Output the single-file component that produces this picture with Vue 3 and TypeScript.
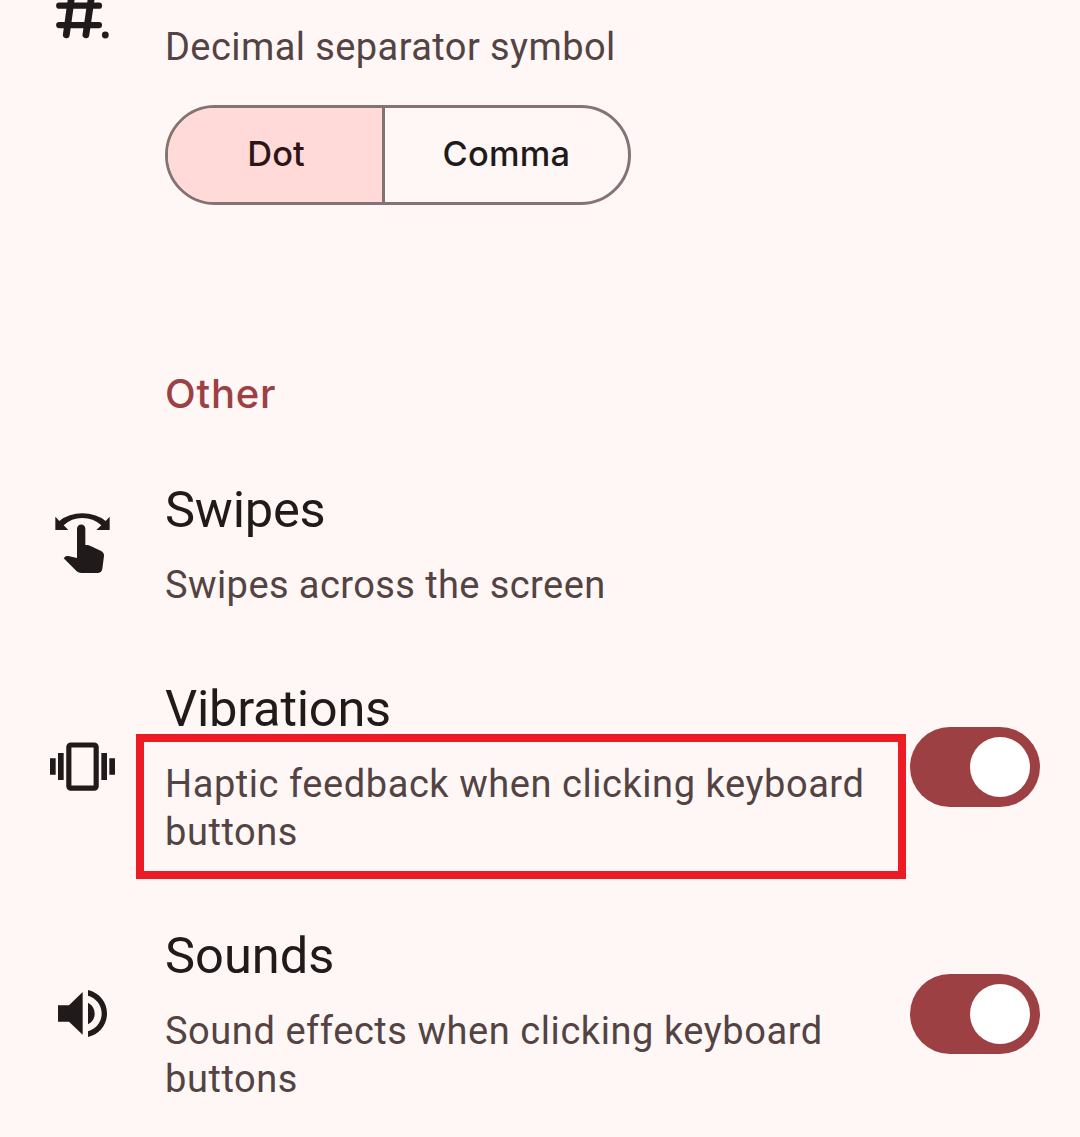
<script setup lang="ts">
import { ref } from 'vue'

interface Setting {
  id: 'swipes' | 'vibrations' | 'sounds'
  title: string
  description: string
  viewBox: string
  iconHeight: number
  toggle: boolean
  highlighted: boolean
}

const separators = ['Dot', 'Comma']
const separator = ref('Dot')
const enabled = ref<Record<string, boolean>>({ vibrations: true, sounds: true })

const settings: Setting[] = [
  { id: 'swipes', title: 'Swipes', description: 'Swipes across the screen', viewBox: '0 3 270 255', iconHeight: 85, toggle: false, highlighted: false },
  { id: 'vibrations', title: 'Vibrations', description: 'Haptic feedback when clicking keyboard buttons', viewBox: '0 0 270 225', iconHeight: 75, toggle: true, highlighted: true },
  { id: 'sounds', title: 'Sounds', description: 'Sound effects when clicking keyboard buttons', viewBox: '0 -3 270 210', iconHeight: 70, toggle: true, highlighted: false },
]
</script>

<template>
  <main class="screen">
    <section class="decimal">
      <svg class="icon" viewBox="0 0 90 50" width="90" height="50" aria-hidden="true">
        <path d="M19.2 5.7H59M19.2 25.1H59" fill="none" stroke="currentColor" stroke-width="6.2" stroke-linecap="round" />
        <path d="M31.4-2L26.3 34.800M51.300-2L45.900 34.800" fill="none" stroke="currentColor" stroke-width="6.8" stroke-linecap="round" />
        <circle cx="65.3" cy="35" r="3.4" fill="currentColor" />
      </svg>
      <div class="decimal-body">
        <p class="description">Decimal separator symbol</p>
        <div class="segments">
          <button
            v-for="option in separators"
            :key="option"
            type="button"
            :class="['segment', option.toLowerCase(), { selected: separator === option }]"
            @click="separator = option"
          >{{ option }}</button>
        </div>
      </div>
    </section>

    <h2 class="heading">Other</h2>

    <section v-for="item in settings" :key="item.id" :class="['row', item.id]">
      <svg class="icon" :viewBox="item.viewBox" width="90" :height="item.iconHeight" fill="currentColor" aria-hidden="true">
        <template v-if="item.id === 'swipes'">
          <path d="M46 50L58 63Q87 40 127 40T197 63L209 50V90H169L184 76Q160 54 127 54Q94 54 71 76L85 90H46Z" />
          <path d="M111 86a12.5 12.5 0 0 1 25 0V135H142Q146 135 150 137L182 152Q193 157 192 168L187 206Q185 219 172 219H124Q116 219 110 214L71 175L77 169Q80 167 85 168L111 174Z" />
        </template>
        <template v-else-if="item.id === 'vibrations'">
          <rect x="86.5" y="45" width="82" height="129.5" rx="6" fill="none" stroke="currentColor" stroke-width="15.5" />
          <path d="M30 85h17v49H30zM54 69h17v81H54zM184 69h17v81h-17zM208 85h17v49h-17z" />
        </template>
        <template v-else>
          <path d="M54 76H87L128 36V164L87 125H54Z" />
          <path d="M144 68Q164 79 164 100.500T144 133Z" />
          <path d="M144 30C178 38 201 66 201 100.500S178 163 144 171V154C168 147 185 126 185 100.500S168 54 144 47Z" />
        </template>
      </svg>
      <div class="body">
        <h3 class="title">{{ item.title }}</h3>
        <p class="description">{{ item.description }}<span v-if="item.highlighted" class="highlight"></span></p>
      </div>
      <button
        v-if="item.toggle"
        type="button"
        role="switch"
        :aria-label="item.title"
        :aria-checked="enabled[item.id]"
        :class="['switch', { on: enabled[item.id] }]"
        @click="enabled[item.id] = !enabled[item.id]"
      ><span class="knob"></span></button>
    </section>
  </main>
</template>

<style>
body {
  margin: 0;
  background: #fff7f6;
}
</style>

<style scoped>
.screen {
  box-sizing: border-box;
  width: 1080px;
  height: 1137px;
  padding: 0 40px;
  overflow: hidden;
  background: #fff7f6;
  color: #201a1a;
  font-family: Roboto, sans-serif;
}
.icon {
  flex: none;
  display: block;
}
.decimal {
  display: flex;
  gap: 35px;
  height: 370px;
}
.decimal-body {
  padding-top: 23px;
}
.description {
  position: relative;
  margin: 0;
  color: #534343;
  font-size: 38px;
  line-height: 48px;
  letter-spacing: 0.56px;
}
.decimal .description,
.swipes .description {
  letter-spacing: 0.42px;
}
.segments {
  box-sizing: border-box;
  display: flex;
  width: 466px;
  height: 100px;
  margin-top: 34px;
  border: 3px solid #857372;
  border-radius: 50px;
  overflow: hidden;
}
.segment {
  box-sizing: border-box;
  flex: 1;
  margin: 0;
  padding: 0 0 4px;
  border: 0;
  background: transparent;
  color: #201a1a;
  font: 500 34.4px Inter, sans-serif;
  letter-spacing: 0.24px;
}
.segment.dot {
  flex: 0 0 217px;
  padding-left: 2px;
  border-right: 3px solid #857372;
  letter-spacing: 0;
}
.segment.selected {
  background: #ffdad8;
  color: #2c1516;
}
.heading {
  margin: 0 0 25.5px 125px;
  color: #9c4044;
  font: 500 40px/48px Inter, sans-serif;
  letter-spacing: 0.8px;
}
.row {
  box-sizing: border-box;
  display: flex;
  align-items: center;
  height: 247px;
}
.row.swipes {
  height: 200px;
}
.body {
  flex: 1;
  align-self: flex-start;
  padding: 35.5px 35px 0;
}
.swipes .body {
  padding-top: 36.5px;
}
.title {
  margin: 0 0 21px;
  font-size: 50.6px;
  font-weight: 400;
  line-height: 60px;
  letter-spacing: -0.2px;
}
.vibrations .title {
  letter-spacing: -0.24px;
}
.sounds .title {
  letter-spacing: 0;
}
.highlight {
  position: absolute;
  top: -26px;
  left: -29px;
  box-sizing: border-box;
  width: 770px;
  height: 145px;
  border: 8px solid #ed1c24;
  pointer-events: none;
}
.switch {
  box-sizing: border-box;
  flex: none;
  display: flex;
  width: 130px;
  height: 80px;
  margin: 0;
  padding: 10px;
  border: 0;
  border-radius: 40px;
  background: #857372;
}
.switch.on {
  justify-content: flex-end;
  background: #9c4044;
}
.knob {
  width: 60px;
  height: 60px;
  border-radius: 50%;
  background: #fff;
}
</style>
